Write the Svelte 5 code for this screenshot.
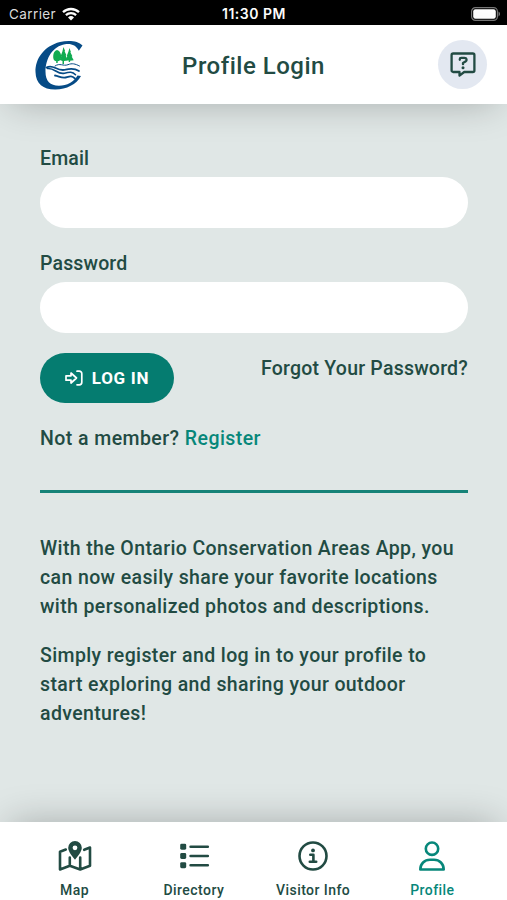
<script lang="ts">
  let email = $state("");
  let password = $state("");
  let active = $state("profile");

  const tabs = [
    { id: "map", label: "Map" },
    { id: "directory", label: "Directory" },
    { id: "visitor", label: "Visitor Info" },
    { id: "profile", label: "Profile" },
  ];
</script>

<div class="screen">
  <div class="status-bar">
    <div class="carrier">
      <span>Carrier</span>
      <svg class="wifi" viewBox="0 0 18 14" aria-hidden="true">
        <path d="M1 5.2a11.6 11.6 0 0 1 16 0M3.9 8.2a7.5 7.5 0 0 1 10.2 0" />
        <path class="wifi-dot" d="M9 13.5 6 10.4a4.5 4.5 0 0 1 6 0z" />
      </svg>
    </div>
    <span class="time">11:30 PM</span>
    <svg class="battery" viewBox="0 0 30 14" aria-hidden="true">
      <rect class="battery-case" x=".6" y=".6" width="25.8" height="12.8" rx="3.8" />
      <rect x="2.2" y="2.2" width="22.6" height="9.6" rx="2.2" fill="#fff" />
      <path d="M27.5 4.6c2 .8 2 4 0 4.8z" fill="#777" />
    </svg>
  </div>

  <header class="app-header">
    <svg class="logo" viewBox="0 0 48 50" aria-hidden="true">
      <path
        fill="#064b86"
        d="M47.5 5.5C43 .5 33 0 25 2 9 6 0 19 .5 32c.3 12 8 17.700 20 17.500 11-.2 21-5 25.500-13.500l-3.500-.6C39 41.500 32 45.700 24 45.700c-9 0-13.500-4.700-13.500-14C10.500 18 18 6.200 30 4.200c6-1 11 .8 13.800 6.500z"
      />
      <g fill="#10ab51">
        <path d="M22 10c3.200 1 4.500 4 4 8-.2 2-1.500 3-3.300 3.200V23h-1.500v-1.800C19 21 18 19 18.200 16c.2-3 1.500-5.500 3.800-6z" />
        <path d="m28.500 7 1.600 4-.5.3 1.800 4-.7.2 2 5-3.700.4V24h-1.500v-3.100L24.800 20l1.500-4-.5-.3 1.500-4z" />
        <path d="m34.500 8 1.400 4-.5.2 2 4-.7.2 2 3.900-3.600.5V22h-1.400v-1.500l-3-.4 1.600-4-.5-.3 1.600-4z" />
      </g>
      <g class="waves">
        <path stroke-width="1" d="M20 26c5-3.500 8 .5 13-1.300 4-1.700 7-1 11.500 1.300" />
        <path stroke-width="1.8" d="M11.500 27.500c7-4.200 10 4.500 19 2.200 4-1.200 8-2.200 13.500 1.300" />
        <path stroke-width="1.6" d="M12.500 28.500c7-1 10 6.500 17 4.700 5-1.400 8-1.700 11 1.500" />
        <path stroke-width="1.8" d="M20 35.500c4 .5 7 3.500 12 1.700 3-1 5-1.500 8 1.300" />
      </g>
    </svg>
    <h1>Profile Login</h1>
    <button class="help" type="button" aria-label="Help">
      <svg viewBox="0 0 26 26" aria-hidden="true">
        <path d="M3.200 1.500h19.600a1.600 1.600 0 0 1 1.600 1.600v15.300a1.600 1.600 0 0 1-1.600 1.600h-8.600l-4.700 3.600V20H3.200a1.600 1.600 0 0 1-1.600-1.600V3.100a1.600 1.600 0 0 1 1.600-1.600z" />
        <path d="M9.800 7.800V7c0-.8.6-1.200 1.400-1.200h3.200c2.400 0 3 2.900 1 3.800L13 10.900v1.300" />
        <circle cx="13" cy="15.800" r="1.500" />
      </svg>
    </button>
  </header>

  <main>
    <form onsubmit={(e) => e.preventDefault()}>
      <label class="field">
        <span>Email</span>
        <input type="email" bind:value={email} />
      </label>
      <label class="field">
        <span>Password</span>
        <input type="password" bind:value={password} />
      </label>
      <div class="actions">
        <button class="login" type="submit">
          <svg viewBox="0 0 18 16" aria-hidden="true">
            <path d="M1 5.800h5V3l5.500 5L6 13v-2.800H1z" />
            <path d="M12 1.200h2.300A2.500 2.500 0 0 1 16.800 3.700v8.600a2.500 2.500 0 0 1-2.500 2.500H12" />
          </svg>
          <span>LOG IN</span>
        </button>
        <a class="forgot" href="#forgot">Forgot Your Password?</a>
      </div>
    </form>

    <p class="member">Not a member? <a href="#register">Register</a></p>

    <hr />

    <div class="intro">
      <p>
        With the Ontario Conservation Areas App, you can now easily share your favorite locations
        with personalized photos and descriptions.
      </p>
      <p>
        Simply register and log in to your profile to start exploring and sharing your outdoor
        adventures!
      </p>
    </div>
  </main>

  <nav class="tab-bar">
    {#each tabs as tab (tab.id)}
      <button
        class="tab"
        class:active={active === tab.id}
        type="button"
        onclick={() => (active = tab.id)}
      >
        <svg viewBox="0 0 34 32" aria-hidden="true">
          {#if tab.id === "map"}
            <path d="M7.800 9.500 2 11.800v17.700l9.800-3.800 10.400 3.800 9.800-3.800V7.500l-5.800 2.300M11.800 17.500v8.200M22.200 17.500v12" />
            <path
              class="solid"
              fill-rule="evenodd"
              d="M17 1a6.800 6.800 0 0 1 6.800 6.800c0 3.600-3.700 8.300-6.800 12-3.100-3.700-6.800-8.400-6.800-12A6.800 6.800 0 0 1 17 1zm0 4.400a2.400 2.400 0 1 0 0 4.800 2.400 2.400 0 0 0 0-4.800z"
            />
          {:else if tab.id === "directory"}
            <g class="solid">
              <rect x="3.200" y="3.700" width="6" height="6" rx="1.400" />
              <rect x="3.200" y="13" width="6" height="6" rx="1.400" />
              <rect x="3.200" y="22.200" width="6" height="6" rx="1.400" />
            </g>
            <path d="M13.600 6.700h17.200M13.600 16h17.200M13.600 25.200h17.200" />
          {:else if tab.id === "visitor"}
            <circle cx="17" cy="16" r="13.500" />
            <path d="M14.300 14.800h3.100v6.700M13.800 21.700h6.400" />
            <circle class="solid" cx="17" cy="10.400" r="1.900" />
          {:else}
            <circle cx="17" cy="8.700" r="6.200" />
            <path d="M5.300 29.500c0-5.800 4.200-9.700 9.700-9.700h4c5.500 0 9.700 3.900 9.700 9.700z" />
          {/if}
        </svg>
        <span>{tab.label}</span>
      </button>
    {/each}
  </nav>
</div>

<style>
  :global(body) {
    margin: 0;
  }

  .screen {
    --ink: #224b43;
    --teal: #07877a;

    display: flex;
    flex-direction: column;
    height: 100vh;
    min-height: 900px;
    overflow: hidden;
    color: var(--ink);
    background: #e0e7e6;
    font-family: Roboto, "Liberation Sans", sans-serif;
    font-size: 19.5px;
    font-weight: 500;
    letter-spacing: 0.4px;
  }

  button {
    padding: 0;
    border: 0;
    color: inherit;
    background: none;
    font: inherit;
    cursor: pointer;
  }

  a {
    color: inherit;
    text-decoration: none;
  }

  svg {
    fill: none;
    stroke-linecap: round;
    stroke-linejoin: round;
  }

  .status-bar {
    display: grid;
    grid-template-columns: 1fr auto 1fr;
    align-items: center;
    box-sizing: border-box;
    height: 25px;
    padding: 2px 6px 0 9px;
    color: #fff;
    background: #000;
    font-family: Inter, "Liberation Sans", sans-serif;
    font-size: 13.5px;
    letter-spacing: 0.4px;
  }

  .carrier {
    display: flex;
    gap: 6px;
    align-items: center;
    color: #ddd;
    font-weight: 400;
  }

  .wifi {
    width: 18px;
    height: 14px;
    stroke: #fff;
    stroke-width: 2.3;
    stroke-linecap: butt;
  }

  .wifi-dot {
    fill: #fff;
    stroke: none;
  }

  .time {
    margin-right: 2px;
    font-size: 14px;
    font-weight: 600;
    letter-spacing: 0.5px;
  }

  .battery {
    justify-self: end;
    width: 30px;
    height: 14px;
  }

  .battery-case {
    stroke: #777;
    stroke-width: 1.2;
  }

  .app-header {
    z-index: 1;
    display: grid;
    grid-template-columns: 1fr auto 1fr;
    flex: none;
    align-items: center;
    box-sizing: border-box;
    height: 79px;
    padding: 0 20px;
    background: #fff;
    box-shadow: 0 8px 38px -10px rgb(0 0 0 / 28%);
  }

  .logo {
    width: 48px;
    height: 50px;
    margin-left: 15px;
  }

  .waves {
    stroke: #064b86;
  }

  h1 {
    margin: 2px 0 0;
    font-size: 24px;
    font-weight: 500;
    letter-spacing: 0.5px;
  }

  .help {
    display: grid;
    place-items: center;
    justify-self: end;
    width: 49px;
    height: 49px;
    border-radius: 50%;
    background: #e3e8f1;
  }

  .help svg {
    width: 26px;
    height: 26px;
    stroke: var(--ink);
    stroke-width: 2.3;
  }

  .help circle {
    fill: var(--ink);
    stroke: none;
  }

  main {
    flex: 1;
    padding: 40px 39px 0 40px;
  }

  .field {
    display: block;
    margin-bottom: 20.5px;
    line-height: 29px;
    letter-spacing: 0.15px;
  }

  .field span {
    display: block;
  }

  input {
    display: block;
    box-sizing: border-box;
    width: 100%;
    height: 51px;
    margin-top: 4px;
    padding: 0 22px;
    border: 0;
    border-radius: 26px;
    outline: none;
    color: inherit;
    background: #fff;
    font: inherit;
  }

  .actions {
    display: flex;
    justify-content: space-between;
    margin-top: -0.5px;
  }

  .login {
    display: flex;
    gap: 9px;
    align-items: center;
    justify-content: center;
    width: 134px;
    height: 50.5px;
    border-radius: 26px;
    color: #fff;
    background: #057c70;
    font-size: 17px;
    font-weight: 700;
    letter-spacing: 0.7px;
  }

  .login svg {
    width: 18px;
    height: 16px;
    stroke: currentColor;
    stroke-width: 1.7;
  }

  .forgot {
    padding-top: 1px;
    line-height: 29px;
    letter-spacing: 0.22px;
  }

  .member {
    margin: 20.5px 0 0;
    line-height: 29px;
    letter-spacing: 0.44px;
  }

  .member a {
    color: var(--teal);
  }

  hr {
    height: 3px;
    margin: 37px 0 41px;
    border: 0;
    background: #168378;
  }

  .intro {
    line-height: 29.3px;
    letter-spacing: 0.38px;
  }

  .intro p {
    margin: 0 0 19.5px;
  }

  .tab-bar {
    z-index: 1;
    display: flex;
    flex: none;
    box-sizing: border-box;
    height: 78px;
    padding: 0 15px;
    background: #fff;
    box-shadow: 0 -8px 38px -10px rgb(0 0 0 / 28%);
  }

  .tab {
    display: flex;
    flex: 1;
    flex-direction: column;
    gap: 9px;
    align-items: center;
    padding-top: 18px;
    font-size: 14px;
    line-height: 19px;
    letter-spacing: 0.45px;
  }

  .tab svg {
    width: 34px;
    height: 32px;
    stroke: currentColor;
    stroke-width: 2.6;
  }

  .tab .solid {
    fill: currentColor;
    stroke: none;
  }

  .tab.active {
    color: var(--teal);
  }
</style>
